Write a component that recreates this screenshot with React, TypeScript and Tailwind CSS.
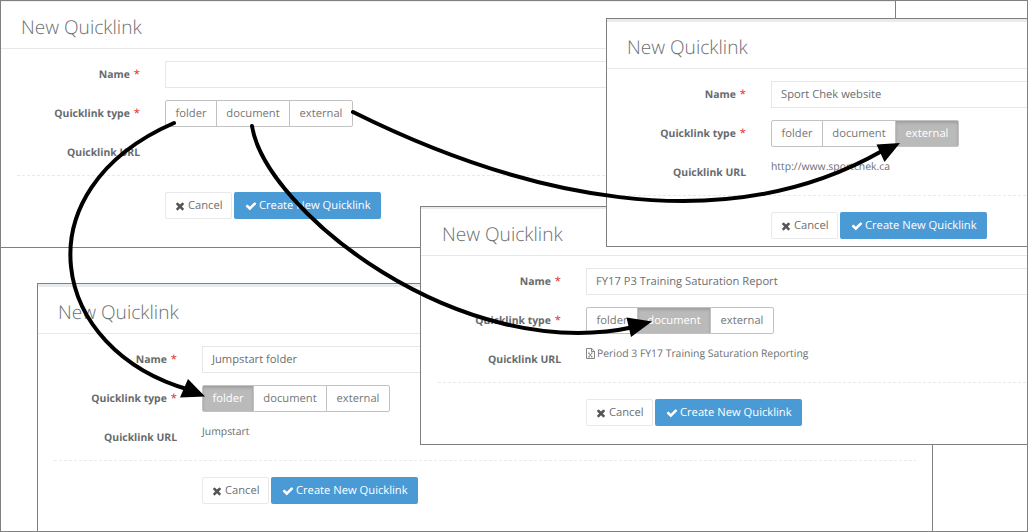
import type { ReactNode } from "react";

type Kind = "folder" | "document" | "external";

const kinds: { name: Kind; width: string }[] = [
  { name: "folder", width: "w-[50px]" },
  { name: "document", width: "w-[73px]" },
  { name: "external", width: "w-[63px]" },
];

function Cross() {
  return (
    <svg viewBox="0 0 1792 1792" className="h-[12px] w-[12px] -ml-px fill-[#555]">
      <path d="M1490 1322q0 40-28 68l-136 136q-28 28-68 28t-68-28l-294-294-294 294q-28 28-68 28t-68-28l-136-136q-28-28-28-68t28-68l294-294-294-294q-28-28-28-68t28-68l136-136q28-28 68-28t68 28l294 294 294-294q28-28 68-28t68 28l136 136q28 28 28 68t-28 68l-294 294 294 294q28 28 28 68z" />
    </svg>
  );
}

function Check() {
  return (
    <svg viewBox="0 0 1792 1792" className="h-[12px] w-[12px] fill-white">
      <path d="M1671 566q0 40-28 68l-724 724-136 136q-28 28-68 28t-68-28l-136-136-362-362q-28-28-28-68t28-68l136-136q28-28 68-28t68 28l294 295 656-657q28-28 68-28t68 28l136 136q28 28 28 68z" />
    </svg>
  );
}

function SheetIcon() {
  return (
    <svg viewBox="0 0 9 11" className="mr-[2px] mb-[2px] h-[11px] w-[9px] fill-none stroke-[#777]">
      <path d="M.5 .5H5.7L8.5 3.3V10.5H.5ZM5.5 .5V3.5H8.5" strokeWidth=".9" />
      <path d="M2.7 5L6 9M6 5L2.7 9M2.2 5H3.6M5.2 5H6.6M2.2 9H3.6M5.2 9H6.6" strokeWidth=".9" />
    </svg>
  );
}

function Label({ children, required }: { children: ReactNode; required?: boolean }) {
  return (
    <div className="flex h-[27px] w-[123px] shrink-0 items-center justify-end pt-[2px] text-[10.4px] font-bold text-[#676a6c]">
      {children}
      {required && <span className="ml-1 text-[11.2px] font-normal text-[#e02222]">*</span>}
    </div>
  );
}

interface PanelProps {
  frame: string;
  head: string;
  name?: string;
  active?: Kind;
  url?: ReactNode;
}

function Panel({ frame, head, name, active, url }: PanelProps) {
  return (
    <section className={`absolute overflow-hidden border border-[#808080] bg-white ${frame}`}>
      <header className={`flex items-end border-b border-[#e7e8ec] pl-5 ${head}`}>
        <h1 className="pb-2 text-[19.1px] leading-[26px] font-light text-[#6c6f71]">New Quicklink</h1>
      </header>
      <div className="flex h-[27px] mt-3">
        <div className="w-4" />
        <Label required>Name</Label>
        <div className="ml-[25px] flex flex-1 items-center border border-[#e5e7e8] pt-[2px] pl-[9px] text-[11.2px] text-[#6c6f71]">
          {name}
        </div>
        <div className="w-[15px]" />
      </div>
      <div className="mt-3 flex h-[27px]">
        <div className="w-4" />
        <Label required>Quicklink type</Label>
        <div className="ml-[25px] flex overflow-hidden rounded-[2px] border border-[#c2c2c2] text-[11.2px] text-[#777]">
          {kinds.map((k, i) => (
            <div
              key={k.name}
              className={`flex items-center justify-center pt-[2px] ${k.width} ${i ? "border-l border-[#c2c2c2]" : ""} ${
                active === k.name ? "bg-[#bababa] font-medium text-white shadow-[inset_0_2px_3px_rgba(0,0,0,0.15)]" : ""
              }`}
            >
              {k.name}
            </div>
          ))}
        </div>
      </div>
      <div className="mt-3 flex h-[27px]">
        <div className="w-4" />
        <Label>Quicklink URL</Label>
        <div className="ml-[25px] flex h-[17px] items-center text-[10.4px] text-[#6c6f71]">{url}</div>
      </div>
      <div className="mx-4 mt-[9px] h-px bg-[repeating-linear-gradient(90deg,#e9e9e9_0_3px,transparent_3px_5px)]" />
      <div className="mt-4 ml-[164px] flex h-[27px] gap-[2px] text-[11.2px]">
        <div className="flex w-[67px] items-center gap-[2px] rounded-[2px] border border-[#e7e9ea] pl-[9px] text-[#6c6f71]">
          <Cross />
          <span className="pt-[2px]">Cancel</span>
        </div>
        <div className="flex w-[147px] items-center gap-[2px] rounded-[2px] bg-[#4a9ad6] pl-[11px] font-medium whitespace-nowrap text-white">
          <Check />
          <span className="pt-[2px]">Create New Quicklink</span>
        </div>
      </div>
    </section>
  );
}

function Arrows() {
  return (
    <svg viewBox="0 0 1028 532" className="absolute top-0 left-0 h-[532px] w-[1028px]">
      <g fill="none" stroke="#000" strokeWidth="4" strokeLinecap="round">
        <path d="M174 123C20 190 48 350 190 390" />
        <path d="M252 126C265 210 460 365 634 327" />
        <path d="M353 112C520 195 720 243 882 151" />
      </g>
      <path d="M205 396.5L188 379L180 397.5Z" />
      <path d="M652 321.5L626.5 317.5L631 337Z" />
      <path d="M900 143L876.5 144.5L884.5 162Z" />
    </svg>
  );
}

export default function App() {
  return (
    <main className="relative h-[532px] w-[1028px] overflow-hidden border border-[#808080] bg-white font-['Open_Sans',sans-serif] [text-rendering:geometricPrecision]">
      <div className="absolute -top-px -left-px h-[532px] w-[1028px]">
        <Panel frame="left-0 top-0 h-[248px] w-[896px]" head="h-12 border-t border-t-[#eff0f2]" />
        <Panel
          frame="left-[37px] top-[283px] h-[249px] w-[896px]"
          head="h-[50px] border-t-[3px] border-t-[#e9ecee]"
          name="Jumpstart folder"
          active="folder"
          url="Jumpstart"
        />
        <Panel
          frame="left-[420px] top-[206px] h-[239px] w-[640px] pl-px"
          head="-ml-px pl-[21px]! h-[49px] border-t-2 border-t-[#e9ecee]"
          name="FY17 P3 Training Saturation Report"
          active="document"
          url={
            <>
              <SheetIcon />
              Period 3 FY17 Training Saturation Reporting
            </>
          }
        />
        <Panel
          frame="left-[606px] top-[18px] h-[229px] w-[460px]"
          head="h-[50px] border-t-[3px] border-t-[#e9ecee]"
          name="Sport Chek website"
          active="external"
          url="http://www.sportchek.ca"
        />
        <div className="absolute top-0 right-0 h-[532px] w-px bg-[#808080]" />
        <div className="absolute bottom-0 left-0 h-px w-[1028px] bg-[#808080]" />
        <Arrows />
      </div>
    </main>
  );
}
